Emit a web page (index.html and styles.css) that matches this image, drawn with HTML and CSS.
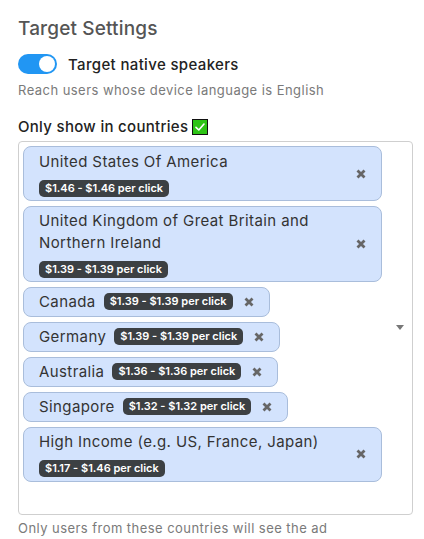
FILE: index.html
```html
<!DOCTYPE html>
<html lang="en">
<head>
<meta charset="utf-8">
<title>Target Settings</title>
<link rel="stylesheet" href="styles.css">
</head>
<body>
<div class="panel">
  <h2 class="title">Target Settings</h2>

  <div class="toggle-row">
    <span class="toggle"><span class="knob"></span></span>
    <span class="toggle-label">Target native speakers</span>
  </div>
  <p class="hint">Reach users whose device language is English</p>

  <div class="field-label">Only show in countries
    <svg class="check" width="16" height="16" viewBox="0 0 16 16" aria-hidden="true">
      <rect x="0.5" y="0.5" width="15" height="15" fill="#2dc415" stroke="#111" stroke-width="1"/>
      <path d="M4 8.3 L6.8 11 L12 5" fill="none" stroke="#fff" stroke-width="1.6" stroke-linecap="round" stroke-linejoin="round"/>
    </svg>
  </div>

  <div class="select">
    <div class="chips">
      <div class="chip">
        <div class="chip-body"><span class="name">United States Of America</span><span class="badge">$1.46 - $1.46 per click</span></div>
        <span class="remove"><svg width="10" height="10" viewBox="0 0 10 10"><path d="M1.5 1.5 L8.5 8.5 M8.5 1.5 L1.5 8.5"/></svg></span>
      </div>
      <div class="chip">
        <div class="chip-body"><span class="name">United Kingdom of Great Britain and Northern Ireland</span><span class="badge">$1.39 - $1.39 per click</span></div>
        <span class="remove"><svg width="10" height="10" viewBox="0 0 10 10"><path d="M1.5 1.5 L8.5 8.5 M8.5 1.5 L1.5 8.5"/></svg></span>
      </div>
      <div class="chip">
        <div class="chip-body"><span class="name">Canada</span><span class="badge">$1.39 - $1.39 per click</span></div>
        <span class="remove"><svg width="10" height="10" viewBox="0 0 10 10"><path d="M1.5 1.5 L8.5 8.5 M8.5 1.5 L1.5 8.5"/></svg></span>
      </div>
      <div class="chip">
        <div class="chip-body"><span class="name">Germany</span><span class="badge">$1.39 - $1.39 per click</span></div>
        <span class="remove"><svg width="10" height="10" viewBox="0 0 10 10"><path d="M1.5 1.5 L8.5 8.5 M8.5 1.5 L1.5 8.5"/></svg></span>
      </div>
      <div class="chip">
        <div class="chip-body"><span class="name">Australia</span><span class="badge">$1.36 - $1.36 per click</span></div>
        <span class="remove"><svg width="10" height="10" viewBox="0 0 10 10"><path d="M1.5 1.5 L8.5 8.5 M8.5 1.5 L1.5 8.5"/></svg></span>
      </div>
      <div class="chip">
        <div class="chip-body"><span class="name">Singapore</span><span class="badge">$1.32 - $1.32 per click</span></div>
        <span class="remove"><svg width="10" height="10" viewBox="0 0 10 10"><path d="M1.5 1.5 L8.5 8.5 M8.5 1.5 L1.5 8.5"/></svg></span>
      </div>
      <div class="chip">
        <div class="chip-body"><span class="name">High Income (e.g. US, France, Japan)</span><span class="badge">$1.17 - $1.46 per click</span></div>
        <span class="remove"><svg width="10" height="10" viewBox="0 0 10 10"><path d="M1.5 1.5 L8.5 8.5 M8.5 1.5 L1.5 8.5"/></svg></span>
      </div>
    </div>
    <span class="arrow"></span>
  </div>
  <p class="hint footer">Only users from these countries will see the ad</p>
</div>
</body>
</html>
```

FILE: styles.css
```css
html, body {
  margin: 0;
  padding: 0;
  background: #fff;
}

body {
  font-family: Inter, "Noto Sans", "Liberation Sans", sans-serif;
  color: #222;
}

.panel {
  padding: 17px 11px 0 18px;
}

.title {
  margin: 0;
  font-size: 19px;
  line-height: 24px;
  font-weight: 500;
  letter-spacing: 0.15px;
  color: #555;
}

.toggle-row {
  display: flex;
  align-items: center;
  gap: 11px;
  margin-top: 13px;
  height: 20px;
}

.toggle {
  position: relative;
  display: inline-block;
  width: 39px;
  height: 20px;
  border-radius: 10px;
  background: #2196f3;
  flex: none;
}

.knob {
  position: absolute;
  top: 2px;
  right: 2px;
  width: 16px;
  height: 16px;
  border-radius: 50%;
  background: #fff;
}

.toggle-label {
  font-size: 15px;
  font-weight: 500;
  letter-spacing: 0.35px;
  color: #222;
}

.hint {
  margin: 7px 0 0;
  font-size: 13px;
  line-height: 18px;
  letter-spacing: 0.45px;
  color: #7a7a7a;
}

.field-label {
  display: flex;
  align-items: center;
  gap: 4px;
  margin-top: 18px;
  font-size: 15px;
  line-height: 20px;
  font-weight: 500;
  letter-spacing: 0.3px;
  color: #222;
}

.check {
  flex: none;
}

.select {
  position: relative;
  margin-top: 4px;
  height: 374px;
  box-sizing: border-box;
  border: 1px solid #cfcfcf;
  border-radius: 4px;
  padding: 4px 30px 4px 4px;
}

.chips {
  display: flex;
  flex-direction: column;
  align-items: flex-start;
  gap: 4.5px;
}

.chip {
  display: inline-flex;
  align-items: center;
  box-sizing: border-box;
  max-width: 359px;
  padding: 3.5px 15px 3.5px 15px;
  background: #d3e3fd;
  border: 1px solid #a9bddb;
  border-radius: 8px;
}

.chip-body {
  display: flex;
  flex-wrap: wrap;
  align-items: center;
  column-gap: 8px;
  row-gap: 7.5px;
  flex: 1 1 auto;
  min-width: 0;
}

.name {
  font-size: 15px;
  line-height: 21.5px;
  letter-spacing: 0.4px;
  color: #333;
  min-width: 0;
}

.badge {
  display: inline-block;
  height: 17px;
  line-height: 17px;
  padding: 0 6px;
  border-radius: 5px;
  background: #3c4043;
  color: #fff;
  font-size: 11px;
  font-weight: 600;
  white-space: nowrap;
}

.remove {
  flex: none;
  display: inline-flex;
  margin-left: 11px;
}

.remove path {
  stroke: #666;
  stroke-width: 2.8;
  stroke-linecap: butt;
}

.arrow {
  position: absolute;
  right: 8px;
  top: 183px;
  width: 0;
  height: 0;
  border-left: 4px solid transparent;
  border-right: 4px solid transparent;
  border-top: 5px solid #777;
}

.footer {
  margin-top: 4px;
}
```
